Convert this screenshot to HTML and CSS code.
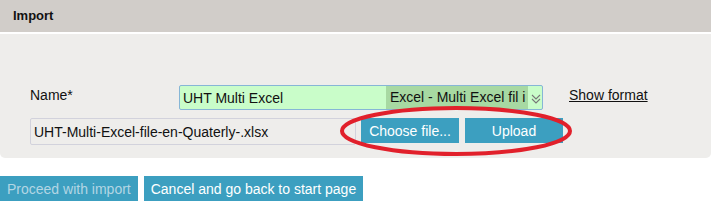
FILE: index.html
```html
<!DOCTYPE html>
<html lang="en">
<head>
    <meta charset="UTF-8">
    <title>Import</title>
    <link rel="stylesheet" href="styles.css">
</head>
<body>
    <div class="header">Import</div>
    <div class="panel">
        <div class="row name-row">
            <label class="label">Name*</label>
            <div class="combo">
                <span class="combo-text">UHT Multi Excel</span>
                <span class="combo-pick">Excel - Multi Excel fil i</span>
                <svg class="chevron" width="12" height="14" viewBox="0 0 12 14">
                    <polyline points="2,3 6,7 10,3" fill="none" stroke="#777" stroke-width="1.1"/>
                    <polyline points="2,7 6,11 10,7" fill="none" stroke="#777" stroke-width="1.1"/>
                </svg>
            </div>
            <a class="show-format" href="#">Show format</a>
        </div>
        <div class="row file-row">
            <div class="file-name">UHT-Multi-Excel-file-en-Quaterly-.xlsx</div>
            <button class="btn btn-fixed">Choose file...</button>
            <button class="btn btn-fixed">Upload</button>
            <svg class="circle" width="240" height="54" viewBox="0 0 240 54">
                <ellipse cx="117" cy="26" rx="114" ry="23" fill="none" stroke="#e1202b" stroke-width="4"/>
            </svg>
        </div>
    </div>
    <div class="actions">
        <button class="btn disabled">Proceed with import</button>
        <button class="btn">Cancel and go back to start page</button>
    </div>
</body>
</html>
```

FILE: styles.css
```css
body {
    margin: 0;
    font-family: "Liberation Sans", Arial, sans-serif;
    font-size: 14px;
    color: #111;
    background: #fff;
    width: 713px;
}

.header {
    height: 32px;
    line-height: 31px;
    padding-left: 13px;
    background-color: #d1cdc9;
    font-weight: bold;
    font-size: 13px;
    margin-right: 2px;
}

.panel {
    margin-top: 2px;
    margin-right: 2px;
    height: 124px;
    box-sizing: border-box;
    padding: 51px 0 0 30px;
    background-color: #eeedeb;
    border-radius: 0 0 5px 5px;
}

.row {
    display: flex;
    align-items: center;
}

.label {
    width: 149px;
    margin-top: -5px;
}

.combo {
    display: flex;
    align-items: center;
    width: 364px;
    height: 25px;
    box-sizing: border-box;
    border: 1px solid #86b6d6;
    border-radius: 2px;
    background-color: #c9fdc9;
}

.combo-text {
    flex: 1;
    padding-left: 3px;
}

.combo-pick {
    width: 138px;
    padding-left: 4px;
    height: 23px;
    line-height: 23px;
    white-space: nowrap;
    overflow: hidden;
    background-color: #a7d9a2;
}

.chevron {
    margin: 2px 0 0 2px;
}

.show-format {
    margin-left: 26px;
    margin-top: -5px;
    color: #111;
}

.file-row {
    position: relative;
    margin-top: 8px;
}

.file-name {
    width: 326px;
    height: 27px;
    line-height: 26px;
    box-sizing: border-box;
    padding-left: 3px;
    border: 1px solid #d2d2dc;
    border-radius: 2px;
    align-self: flex-start;
}

.btn {
    font-family: inherit;
    font-size: 14px;
    color: #fff;
    background-color: #3c9fc0;
    border: none;
    height: 25px;
    padding: 0 7px;
    cursor: pointer;
}

.btn-fixed {
    width: 98px;
    margin-left: 6px;
    align-self: flex-start;
}

.file-row .btn-fixed:first-of-type {
    margin-left: 5px;
}

.circle {
    position: absolute;
    left: 309px;
    top: -13px;
    pointer-events: none;
}

.actions {
    display: flex;
    gap: 6px;
    margin-top: 18px;
}

.disabled {
    color: #b3d6e4;
}
```
